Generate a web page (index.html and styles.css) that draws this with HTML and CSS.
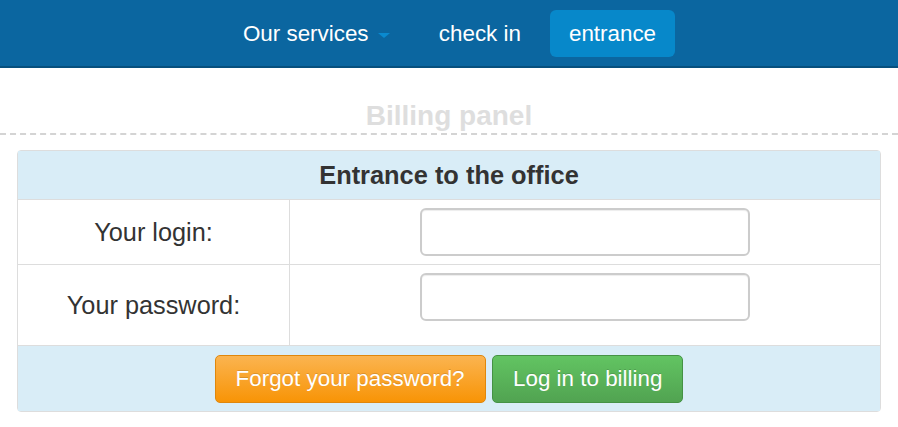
FILE: index.html
```html
<!DOCTYPE html>
<html lang="en">
<head>
  <meta charset="UTF-8" />
  <title>Billing panel</title>
  <link rel="stylesheet" href="styles.css">
</head>
<body>
  <div class="navbar">
    <ul class="nav">
      <li><a href="#">Our services <span class="caret"></span></a></li>
      <li><a href="#">check in</a></li>
      <li class="active"><a href="#">entrance</a></li>
    </ul>
  </div>

  <h1 class="page-title">Billing panel</h1>

  <form class="login">
    <table class="login-table">
      <tr class="head">
        <th colspan="2">Entrance to the office</th>
      </tr>
      <tr class="row-login">
        <td class="label">Your login:</td>
        <td class="field"><input type="text" name="login" /></td>
      </tr>
      <tr class="row-pass">
        <td class="label">Your password:</td>
        <td class="field"><input type="password" name="password" /></td>
      </tr>
      <tr class="foot">
        <td colspan="2">
          <button type="button" class="btn btn-warning">Forgot your password?</button>
          <button type="submit" class="btn btn-success">Log in to billing</button>
        </td>
      </tr>
    </table>
  </form>
</body>
</html>
```

FILE: styles.css
```css
body {
  font-family: "Liberation Sans", Arial, sans-serif;
  margin: 0;
  padding: 0;
  background-color: #fff;
  color: #333;
}

.navbar {
  height: 66px;
  background-color: #0b66a0;
  border-bottom: 2px solid #07507e;
}

.nav {
  list-style: none;
  margin: 0;
  padding: 10px 0 0;
  display: flex;
  justify-content: center;
  gap: 9px;
}

.nav a {
  display: block;
  height: 47px;
  line-height: 47px;
  padding: 0 20px;
  font-size: 22.4px;
  color: #fff;
  text-decoration: none;
  border-radius: 6px;
}

.nav .active a {
  background-color: #0788ca;
  padding: 0 19px;
}

.caret {
  display: inline-block;
  width: 0;
  height: 0;
  margin-left: 3px;
  vertical-align: middle;
  border-top: 5px solid #0a8ad0;
  border-left: 6px solid transparent;
  border-right: 6px solid transparent;
}

.page-title {
  margin: 32px 0 0;
  padding-bottom: 1px;
  font-size: 28px;
  line-height: 32px;
  text-align: center;
  color: #dedede;
  border-bottom: 2px dashed #d4d4d4;
}

.login {
  margin: 15px 17px 0;
}

.login-table {
  width: 864px;
  border-collapse: separate;
  border-spacing: 0;
  border: 1px solid #ddd;
  border-radius: 4px;
}

.login-table th,
.login-table td {
  padding: 0;
  text-align: center;
}

.head th {
  height: 48px;
  background-color: #d9edf7;
  font-size: 25.4px;
  font-weight: bold;
  color: #333;
  border-bottom: 1px solid #ddd;
}

.label {
  width: 271px;
  font-size: 25.3px;
  border-right: 1px solid #ddd;
  vertical-align: middle;
}

.field {
  vertical-align: top;
}

.row-login td {
  height: 64px;
  border-bottom: 1px solid #ddd;
}

.row-pass td {
  height: 80px;
  border-bottom: 1px solid #ddd;
}

.field input {
  box-sizing: border-box;
  width: 330px;
  height: 48px;
  margin-top: 8px;
  padding: 4px 10px;
  font-size: 20px;
  border: 2px solid #ccc;
  border-radius: 6px;
  box-shadow: inset 0 1px 1px rgba(0, 0, 0, 0.075);
}

.foot td {
  height: 65px;
  background-color: #d9edf7;
}

.btn {
  height: 48px;
  margin: 0 1px;
  padding: 0 20px;
  font-family: "Liberation Sans", Arial, sans-serif;
  font-size: 22.4px;
  color: #fff;
  border-radius: 5px;
  text-shadow: 0 -1px 0 rgba(0, 0, 0, 0.15);
  cursor: pointer;
}

.btn-warning {
  background: linear-gradient(#fbb450, #f89406);
  border: 1px solid #e0870c;
}

.btn-success {
  background: linear-gradient(#62c462, #51a351);
  border: 1px solid #459245;
}
```
